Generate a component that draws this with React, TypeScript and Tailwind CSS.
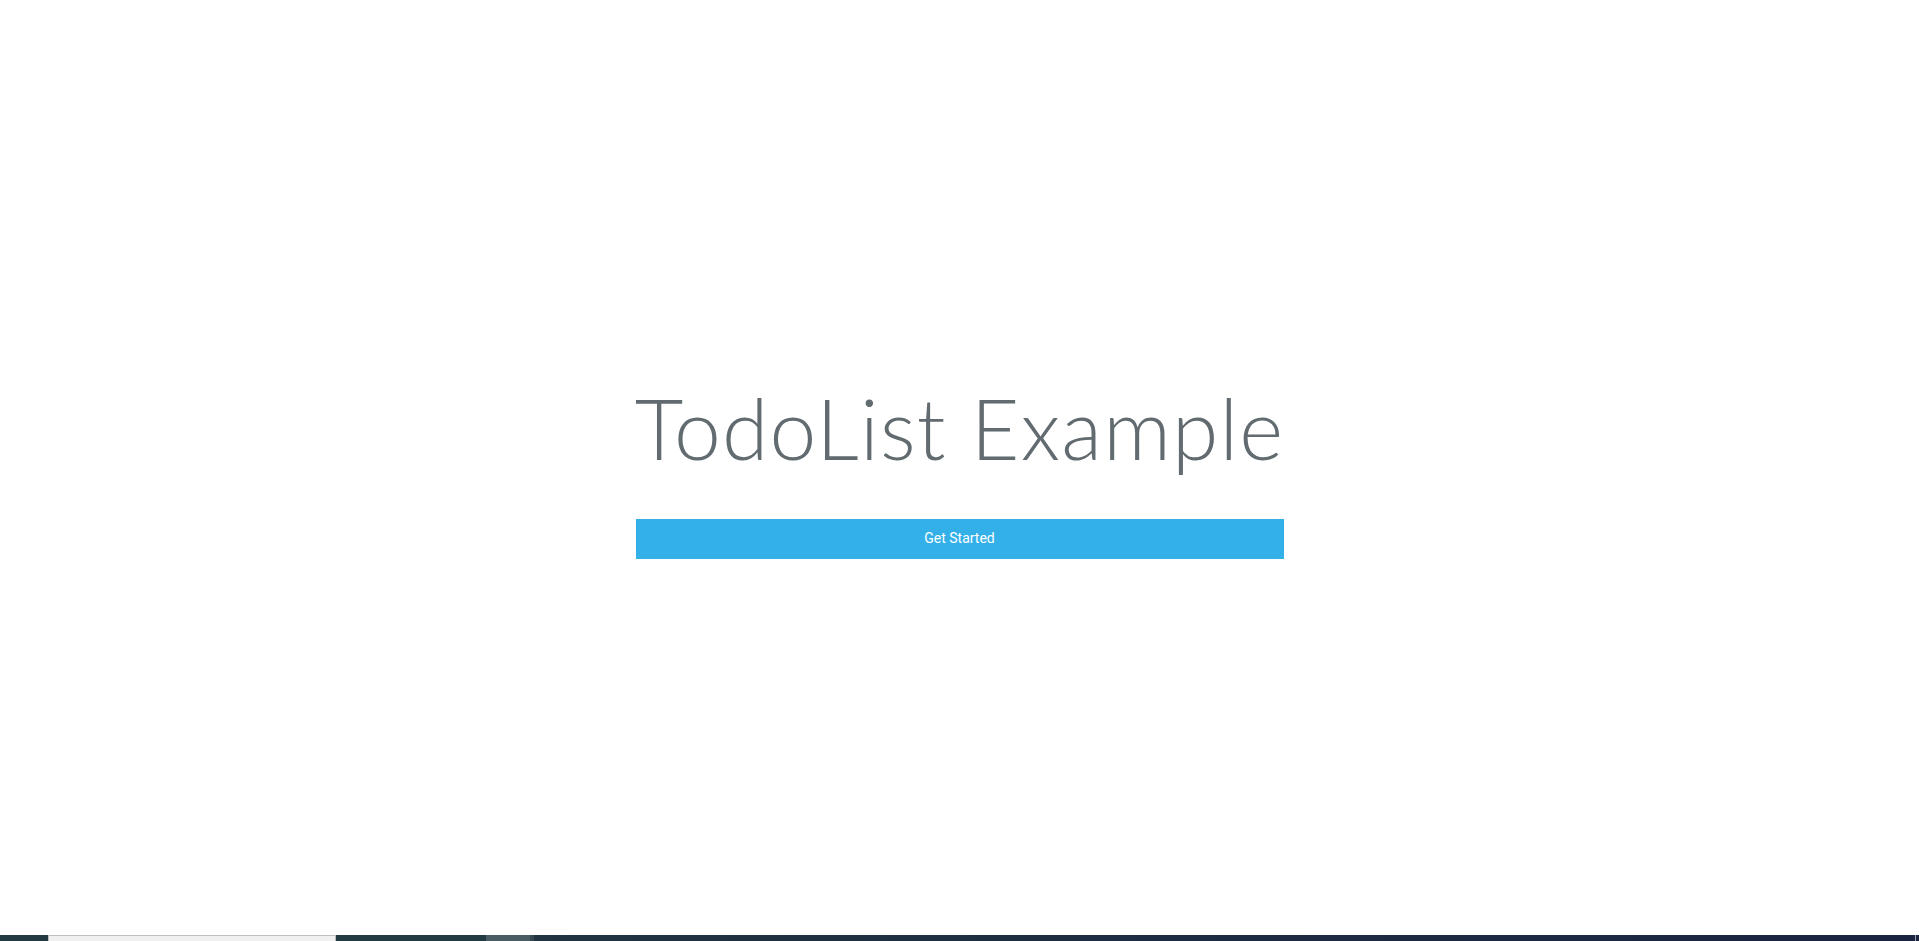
export default function App() {
  return (
    <div className="flex h-screen w-full flex-col bg-white">
      {/* hero */}
      <div className="flex flex-1 items-center justify-center">
        <div className="flex w-[648px] flex-col items-stretch pt-[9px]">
          <h1 className="-mx-4 whitespace-nowrap text-center font-['Lato',sans-serif] text-[84px] font-light leading-none tracking-[1.2px] text-[#626b70]">
            TodoList Example
          </h1>
          <button className="mt-[49px] h-[40px] w-full bg-[#33b0e8] font-['Roboto',sans-serif] text-[14px] text-white">
            Get Started
          </button>
        </div>
      </div>

      {/* taskbar strip */}
      <div className="flex h-[6px] w-full bg-gradient-to-r from-[#223a42] to-[#1b2340]">
        <div className="w-[48px]" />
        <div className="w-[288px] border-x border-t border-[#bdbdbd] bg-[#f0f0f0]" />
        <div className="w-[150px] bg-[#223a42]" />
        <div className="w-[44px] bg-[#4a5d64]" />
        <div className="w-[4px] bg-[#364850]" />
        <div className="flex-1" />
        <div className="w-[1px] bg-[#9aa3b0]" />
        <div className="w-[3px]" />
      </div>
    </div>
  )
}
